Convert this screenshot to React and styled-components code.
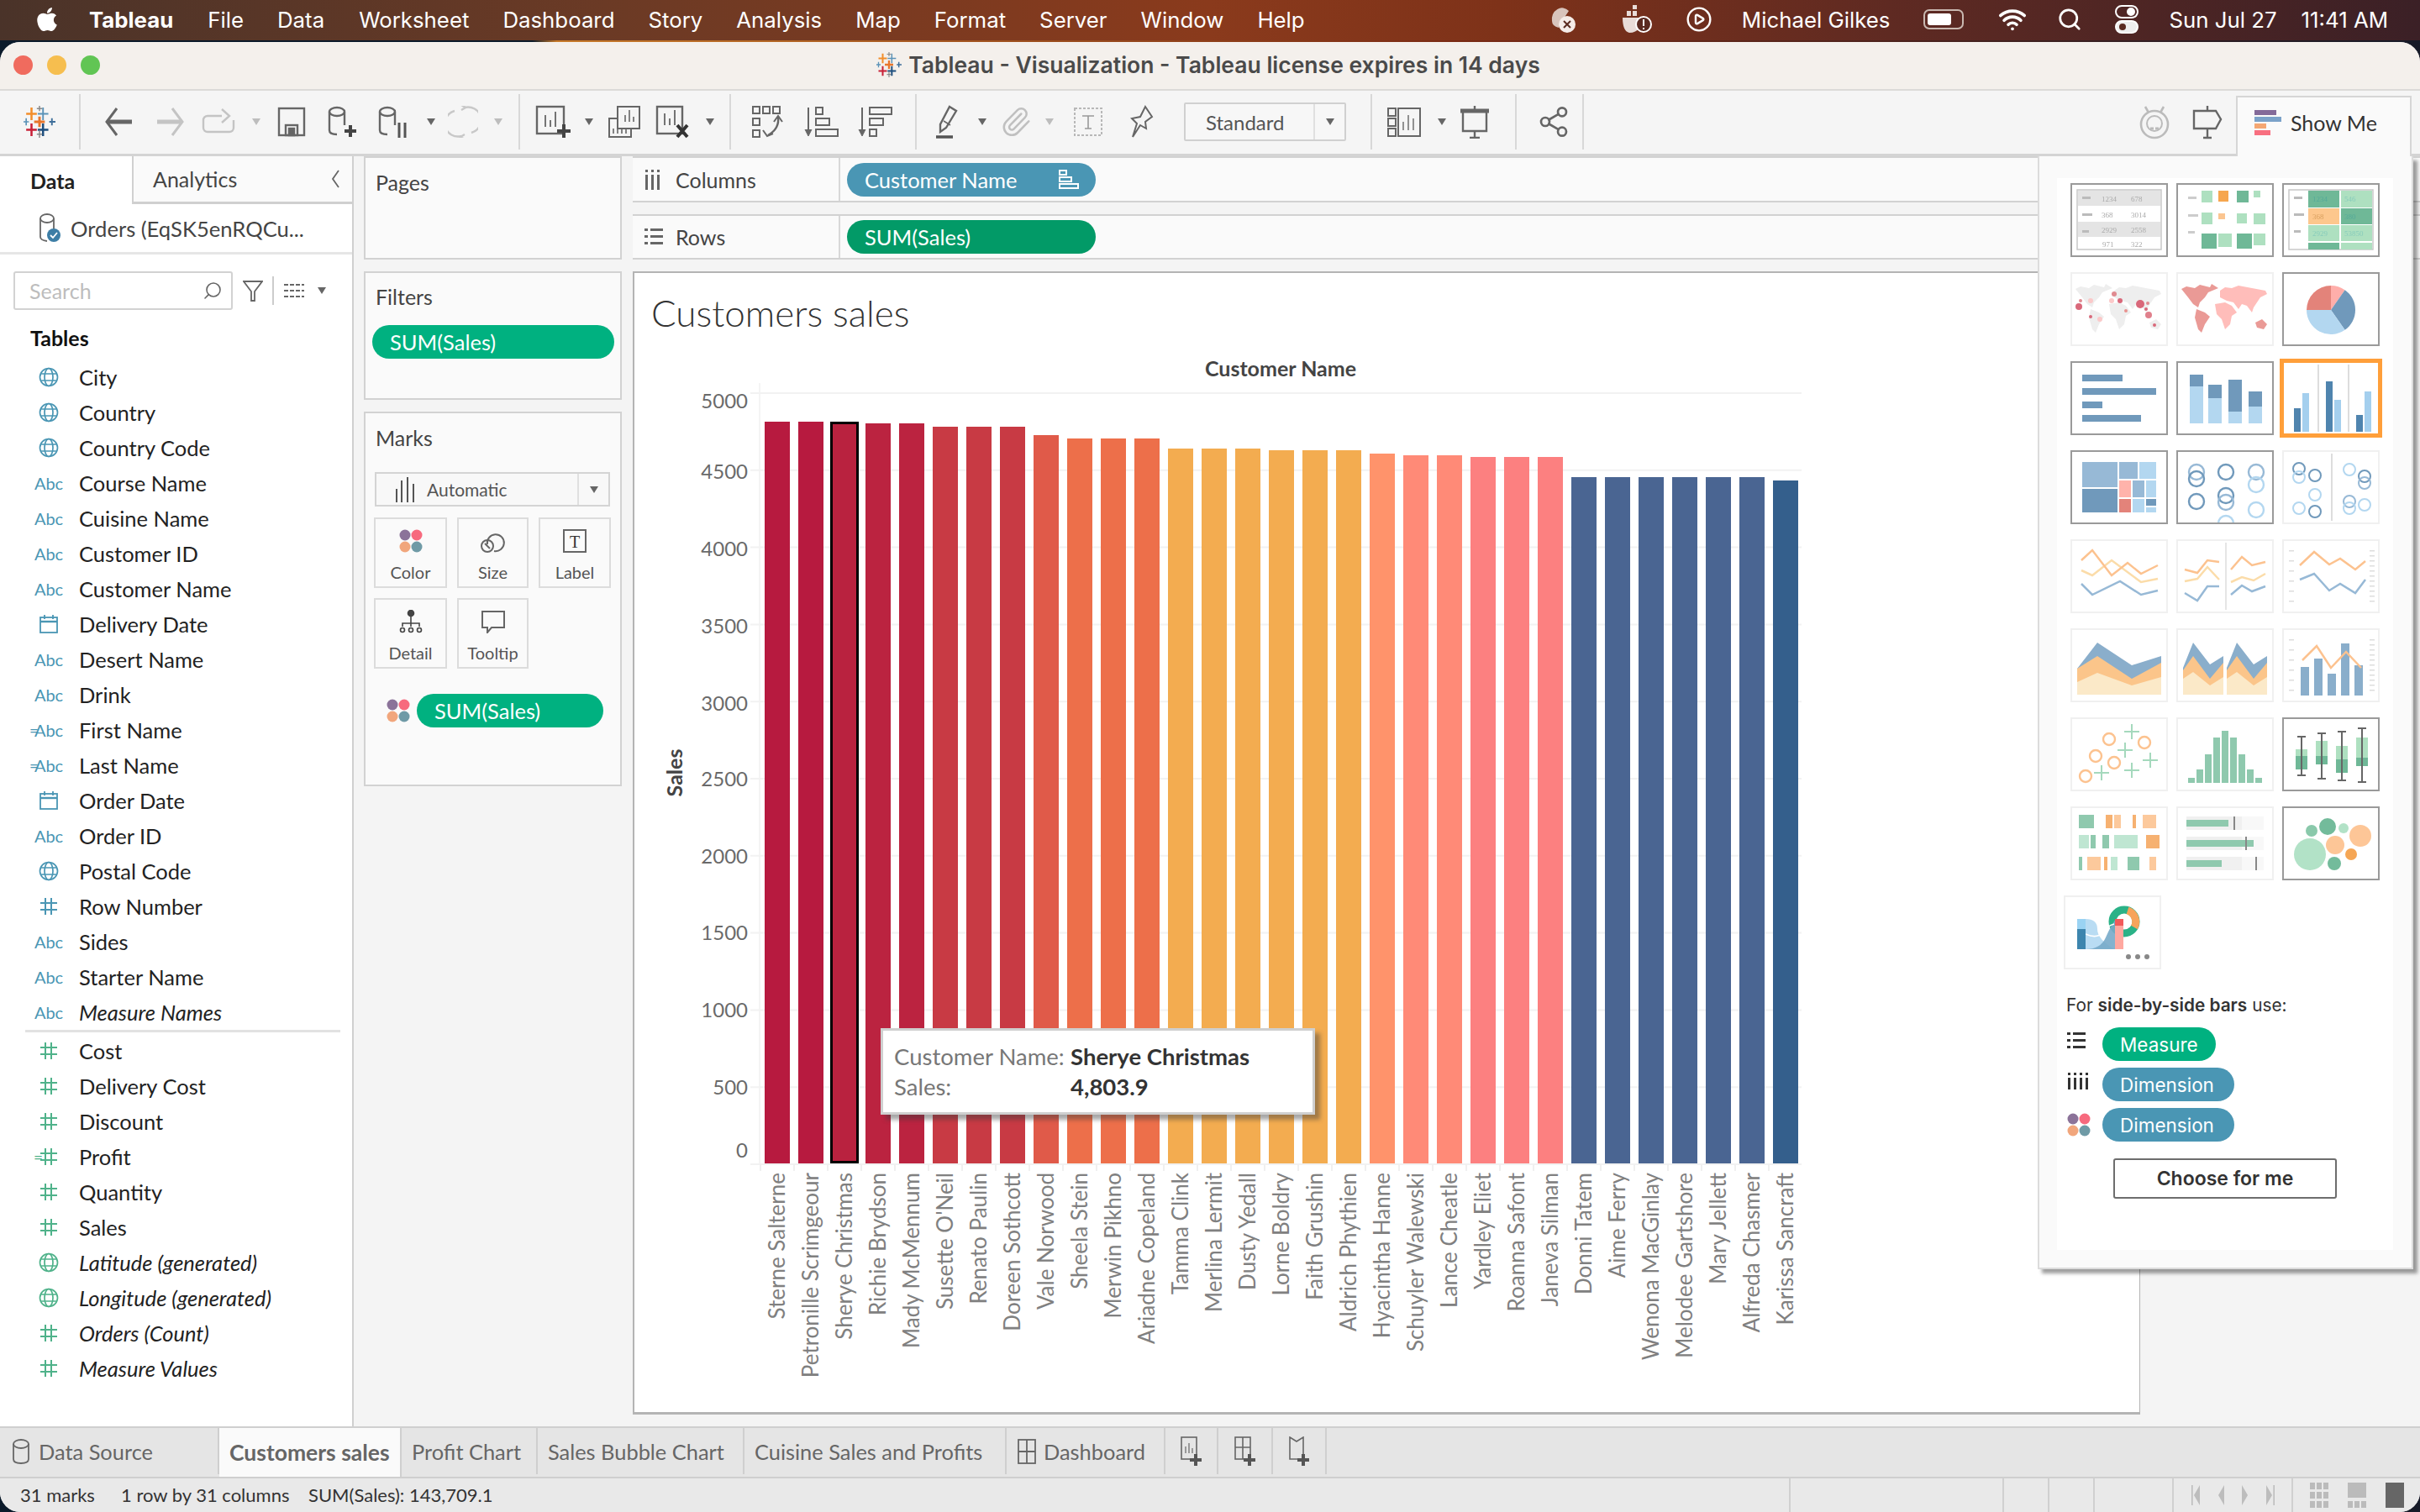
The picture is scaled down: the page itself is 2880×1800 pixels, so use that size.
import styled, { createGlobalStyle } from "styled-components";
import { FaApple } from "react-icons/fa";
import { CirclePlay, Paperclip, Search, Share2, Wifi } from "lucide-react";

const GREEN = "#00b180";
const GREEN_DARK = "#029a67";
const BLUE = "#4a96b4";
const FIELD_GREEN = "#4fb28a";

const GlobalStyle = createGlobalStyle`
  html, body { margin: 0; padding: 0; }
  body { font-family: "Lato", "Liberation Sans", sans-serif; background: #0a1626; }
  * { box-sizing: border-box; }
`;

const Desktop = styled.div`
  width: 2880px;
  height: 1800px;
  overflow: hidden;
  display: flex;
  flex-direction: column;
  background: linear-gradient(90deg, #0b1a2a 0%, #0b1a2a 22%, #c77a2a 23%, #7a2a14 60%, #161a28 100%);
`;

/* ---- menu bar ---- */
const MenuBar = styled.div`
  height: 48px;
  flex: none;
  display: flex;
  align-items: center;
  padding: 0 0 2px 40px;
  color: #fff;
  font-family: "Inter", "Liberation Sans", sans-serif;
  font-size: 25.8px;
  background: linear-gradient(90deg, #4a3329 0%, #6b3a25 25%, #8a3a1c 50%, #7e3219 62%, #5f2a22 78%, #3b2026 100%);
`;
const MenuItem = styled.span`
  margin-left: ${(p) => p.$gap}px;
  font-weight: ${(p) => (p.$bold ? 700 : 400)};
`;
const MenuRight = styled.div`
  margin-left: auto;
  display: flex;
  align-items: center;
  height: 100%;
`;
const MenuSlot = styled.div`
  width: ${(p) => p.$w}px;
  display: flex;
  justify-content: center;
  align-items: center;
`;
const BatteryShell = styled.div`
  width: 48px;
  height: 24px;
  margin-left: 16px;
  border: 2px solid #c8b8b0;
  border-radius: 7px;
  padding: 3px;
  &::before {
    content: "";
    display: block;
    width: 28px;
    height: 14px;
    background: #fff;
    border-radius: 3px;
  }
`;

/* ---- window chrome ---- */
const Window = styled.div`
  flex: 1;
  margin-top: 2px;
  min-height: 0;
  display: flex;
  flex-direction: column;
  border-radius: 24px;
  overflow: hidden;
  background: #f4f4f4;
`;
const TitleBar = styled.div`
  height: 58px;
  flex: none;
  display: flex;
  align-items: center;
  justify-content: center;
  position: relative;
  background: #f4f0ec;
  border-bottom: 2px solid #dcdad8;
  font-family: "Inter", "Liberation Sans", sans-serif;
  font-size: 26.5px;
  font-weight: 600;
  color: #4a4a4a;
  gap: 8px;
  padding: 0 4px 2px 0;
`;
const Traffic = styled.div`
  position: absolute;
  left: 16px;
  top: 16px;
  display: flex;
  gap: 17px;
`;
const Light = styled.span`
  width: 23px;
  height: 23px;
  border-radius: 50%;
  background: ${(p) => p.$c};
`;
const Toolbar = styled.div`
  height: 78px;
  flex: none;
  display: flex;
  align-items: stretch;
  position: relative;
  background: #f5f5f5;
  border-bottom: 3px solid #d4d4d4;
  padding-right: 10px;
`;
const ToolGroup = styled.div`
  display: flex;
  align-items: center;
  margin: 4px 0 5px;
  border-right: 2px solid #d8d8d8;
  width: ${(p) => p.$w}px;
  flex: none;
  &:last-of-type { border-right: 0; }
`;
const ToolSlot = styled.div`
  width: ${(p) => p.$w}px;
  flex: none;
  display: flex;
  justify-content: center;
  align-items: center;
`;
const Caret = styled.span`
  width: 0;
  height: 0;
  border-left: 5px solid transparent;
  border-right: 5px solid transparent;
  border-top: 8px solid ${(p) => (p.$light ? "#bdbdbd" : "#666")};
`;
const ViewSelect = styled.div`
  width: 193px;
  height: 46px;
  flex: none;
  margin-left: 25px;
  display: flex;
  align-items: center;
  border: 2px solid #d0d0d0;
  border-radius: 2px;
  background: #f7f7f7;
  font-size: 24px;
  color: #555;
  padding-left: 24px;
  > span { flex: 1; }
`;
const SelectArrow = styled.div`
  width: 37px;
  height: 100%;
  border-left: 2px solid #e0e0e0;
  display: flex;
  align-items: center;
  justify-content: center;
`;
const RightTools = styled.div`
  display: flex;
  align-items: center;
  position: absolute;
  left: 2532px;
  height: 75px;
`;
const ShowMeTab = styled.div`
  width: 209px;
  margin-left: auto;
  margin-top: 6px;
  margin-bottom: -3px;
  height: 72px;
  position: relative;
  z-index: 5;
  display: flex;
  align-items: center;
  gap: 11px;
  padding: 0 0 10px 20px;
  background: #fafafa;
  border: 2px solid #d6d6d6;
  border-bottom: 0;
  font-size: 25px;
  color: #333;
`;

/* ---- workspace ---- */
const Workspace = styled.div`
  flex: 1;
  min-height: 0;
  display: flex;
  position: relative;
  background: #f4f4f4;
`;
const DataPane = styled.aside`
  width: 421px;
  flex: none;
  background: #fff;
  border-right: 2px solid #d0d0d0;
  display: flex;
  flex-direction: column;
`;
const PaneTabs = styled.div`
  display: flex;
  height: 57px;
  flex: none;
`;
const PaneTab = styled.div`
  display: flex;
  align-items: center;
  font-size: 25px;
  color: ${(p) => (p.$active ? "#222" : "#444")};
  font-weight: ${(p) => (p.$active ? 700 : 400)};
  width: ${(p) => (p.$active ? "157px" : "auto")};
  flex: ${(p) => (p.$active ? "none" : "1")};
  padding-left: ${(p) => (p.$active ? "36px" : "23px")};
  background: ${(p) => (p.$active ? "#fff" : "#fafafa")};
  border-left: ${(p) => (p.$active ? "0" : "2px solid #d0d0d0")};
  border-bottom: ${(p) => (p.$active ? "0" : "3px solid #d0d0d0")};
  justify-content: ${(p) => (p.$active ? "flex-start" : "space-between")};
  padding-right: 14px;
`;
const SourceRow = styled.div`
  height: 60px;
  flex: none;
  display: flex;
  align-items: center;
  gap: 10px;
  padding-left: 44px;
  font-size: 25.6px;
  color: #444;
  border-bottom: 3px solid #e6e6e6;
`;
const SearchRow = styled.div`
  margin-top: 20px;
  height: 46px;
  flex: none;
  display: flex;
  align-items: center;
  padding-left: 16px;
`;
const SearchBox = styled.div`
  width: 261px;
  height: 100%;
  display: flex;
  align-items: center;
  justify-content: space-between;
  border: 2px solid #d2d2d2;
  border-radius: 3px;
  padding: 0 10px 0 17px;
  font-size: 25px;
  color: #bdbdbd;
  svg { transform: scaleX(-1); }
`;
const SearchTools = styled.div`
  display: flex;
  align-items: center;
  margin-left: 12px;
  gap: 10px;
`;
const TablesTitle = styled.div`
  height: 40px;
  margin-top: 13px;
  flex: none;
  display: flex;
  align-items: center;
  padding-left: 36px;
  font-size: 25px;
  font-weight: 700;
  color: #111;
`;
const FieldList = styled.div`
  margin-top: 6px;
  display: flex;
  flex-direction: column;
`;
const FieldRow = styled.div`
  height: 42px;
  flex: none;
  display: flex;
  align-items: center;
  padding-left: 30px;
  font-size: 25.5px;
  color: #222;
  font-style: ${(p) => (p.$italic ? "italic" : "normal")};
`;
const FieldIconSlot = styled.div`
  width: 56px;
  height: 100%;
  margin-right: 8px;
  flex: none;
  position: relative;
  display: flex;
  align-items: center;
  justify-content: center;
  font-style: normal;
`;
const AbcMark = styled.span`
  font-size: 20px;
  color: ${BLUE};
`;
const CalcMark = styled.span`
  position: absolute;
  left: ${(p) => p.$left}px;
  font-size: 19px;
  color: ${(p) => p.$c};
`;
const Divider = styled.div`
  height: 3px;
  flex: none;
  margin: 0 14px 1px 30px;
  background: #e2e2e2;
`;

/* ---- pages / filters / marks ---- */
const CardsColumn = styled.div`
  width: 307px;
  flex: none;
  margin: 0 13px 0 12px;
  display: flex;
  flex-direction: column;
  gap: 14px;
`;
const Card = styled.section`
  height: ${(p) => p.$h}px;
  flex: none;
  background: #fafafa;
  border: 2px solid #d2d2d2;
  padding: ${(p) => p.$pt}px 12px 0 8px;
`;
const CardTitle = styled.div`
  font-size: 25px;
  line-height: 30px;
  color: #444;
  padding-left: 4px;
`;
const Pill = styled.div`
  display: flex;
  align-items: center;
  justify-content: space-between;
  height: 40px;
  flex: none;
  width: ${(p) => p.$w}px;
  border-radius: 20px;
  background: ${(p) => p.$c};
  color: #fff;
  font-size: 25.5px;
  padding: 0 20px 0 21px;
`;
const FilterPill = styled(Pill)`
  margin-top: 19px;
`;
const MarkSelect = styled.div`
  margin-top: 26px;
  margin-left: 3px;
  width: 280px;
  height: 41px;
  border: 2px solid #d4d4d4;
  display: flex;
  align-items: center;
  font-size: 21px;
  color: #555;
  padding-left: 23px;
  gap: 15px;
  background: #f8f8f8;
  > span { flex: 1; }
`;
const MarkGrid = styled.div`
  margin: 13px 0 0 2px;
  display: grid;
  grid-template-columns: 87px 85px 86px;
  grid-auto-rows: 84px;
  gap: 12px;
  width: 280px;
`;
const MarkButton = styled.div`
  border: 2px solid #dcdcdc;
  background: #fafafa;
  display: flex;
  flex-direction: column;
  align-items: center;
  justify-content: flex-start;
  padding-top: 12px;
  font-size: 20px;
  color: #555;
  gap: 11px;
  svg { flex: none; }
`;
const MarkField = styled.div`
  margin: 30px 0 0 17px;
  display: flex;
  align-items: center;
  gap: 8px;
`;

/* ---- shelves and view ---- */
const SheetColumn = styled.div`
  flex: 1;
  min-width: 0;
  display: flex;
  flex-direction: column;
`;
const Shelf = styled.div`
  height: ${(p) => p.$h}px;
  flex: none;
  display: flex;
  align-items: center;
  background: #fafafa;
  border-top: 2px solid #d2d2d2;
  border-bottom: 2px solid #d2d2d2;
  margin-bottom: 14px;
`;
const ShelfLabel = styled.div`
  width: 247px;
  height: 100%;
  flex: none;
  display: flex;
  align-items: center;
  gap: 15px;
  padding-left: 14px;
  font-size: 25px;
  color: #444;
  border-right: 2px solid #d8d8d8;
  margin-right: 8px;
`;
const View = styled.div`
  width: 1794px;
  height: 1361px;
  flex: none;
  position: relative;
  background: #fff;
  border: 2px solid #b4b4b4;
  border-bottom-width: 3px;
  border-right-width: 1px;
`;
const ViewTitle = styled.h2`
  margin: 0;
  height: 95px;
  padding: 22px 0 0 20px;
  font-size: 44px;
  line-height: 50px;
  font-weight: 300;
  color: #333;
`;
const ChartSvg = styled.svg`
  display: block;
  text {
    font-family: "Lato", "Liberation Sans", sans-serif;
  }
`;
const Tooltip = styled.div`
  position: absolute;
  left: 293px;
  top: 899px;
  width: 517px;
  height: 103px;
  background: #fff;
  border: 3px solid #cfcfcf;
  box-shadow: 6px 6px 5px rgba(60, 60, 60, 0.45);
  display: grid;
  grid-template-columns: 210px 1fr;
  grid-auto-rows: 36px;
  padding: 12px 0 0 13px;
  font-size: 27.5px;
  align-items: center;
  color: #777;
  b {
    font-weight: 700;
    color: #333;
  }
`;

/* ---- show me ---- */
const ShowMePanel = styled.div`
  position: absolute;
  z-index: 4;
  left: 2425px;
  top: 0;
  width: 447px;
  height: 1325px;
  background: #fafafa;
  border: 2px solid #dcdcdc;
  border-top: 0;
  padding: 26px 0 0 21px;
  box-shadow: 5px 5px 4px rgba(0, 0, 0, 0.38);
`;
const ShowMeInner = styled.div`
  width: 400px;
  height: 1276px;
  background: #fff;
  padding: 6px 0 0 16px;
  font-family: "Inter", "Liberation Sans", sans-serif;
`;
const ThumbGrid = styled.div`
  display: grid;
  grid-template-columns: repeat(3, 116px);
  grid-auto-rows: 88px;
  column-gap: 10px;
  row-gap: 18px;
`;
const Thumb = styled.div`
  position: relative;
  border: 2px solid ${(p) => (p.$sel ? "#ff9f3a" : p.$on ? "#9a9a9a" : "#f0f0f0")};
  box-shadow: ${(p) => (p.$sel ? "0 0 0 3px #ff9f3a" : "none")};
  background: #fff;
  margin-left: ${(p) => (p.$shift ? "-8px" : "0")};
  margin-right: ${(p) => (p.$shift ? "8px" : "0")};
  overflow: hidden;
  svg {
    position: absolute;
    left: -2px;
    top: -2px;
    filter: blur(0.45px);
  }
`;
const Hint = styled.div`
  margin: 30px 0 0 -5px;
  font-size: 20.8px;
  line-height: 26px;
  color: #333;
  b { font-weight: 600; }
`;
const NeedList = styled.div`
  margin: 13px 0 0 -4px;
  display: flex;
  flex-direction: column;
  gap: 8px;
`;
const NeedRow = styled.div`
  display: flex;
  align-items: center;
  gap: 14px;
  svg { flex: none; }
`;
const NeedIcon = styled.div`
  width: 28px;
  display: flex;
  align-self: ${(p) => (p.$top ? "flex-start" : "center")};
  padding-top: ${(p) => (p.$top ? "6px" : "0")};
`;
const NeedPill = styled(Pill)`
  width: ${(p) => p.$w}px;
  font-size: 22.5px;
  padding: 0 0 0 21px;
`;
const ChooseButton = styled.button`
  display: block;
  margin: 20px 0 0 51px;
  width: 266px;
  height: 48px;
  background: #fff;
  border: 2px solid #6d6d6d;
  border-radius: 3px;
  font-family: inherit;
  font-size: 23px;
  font-weight: 600;
  color: #333;
`;

/* ---- tabs and status ---- */
const SheetTabs = styled.div`
  height: 60px;
  flex: none;
  display: flex;
  background: #e5e5e5;
  border-top: 2px solid #cfcfcf;
`;
const SheetTab = styled.div`
  width: ${(p) => p.$w}px;
  flex: none;
  display: flex;
  align-items: center;
  justify-content: ${(p) => (p.$center ? "center" : "flex-start")};
  gap: 8px;
  padding-left: ${(p) => (p.$center ? 0 : p.$pl ?? 12)}px;
  font-size: ${(p) => (p.$active ? 26.5 : 25.4)}px;
  color: #666;
  font-weight: ${(p) => (p.$active ? 700 : 400)};
  background: ${(p) => (p.$active ? "#fafafa" : "transparent")};
  border-right: 2px solid #cfcfcf;
  margin-bottom: ${(p) => (p.$active ? "0" : "3px")};
  white-space: nowrap;
`;
const StatusBar = styled.div`
  height: 42px;
  flex: none;
  display: flex;
  align-items: stretch;
  background: #e9e9e9;
  border-top: 2px solid #cfcfcf;
  font-size: 22px;
  color: #333;
`;
const StatusText = styled.div`
  display: flex;
  align-items: center;
  white-space: nowrap;
  margin-left: ${(p) => p.$ml}px;
  width: ${(p) => p.$w}px;
  flex: none;
  padding-bottom: 2px;
`;
const StatusCell = styled.div`
  width: ${(p) => p.$w}px;
  flex: none;
  display: flex;
  align-items: center;
  justify-content: space-around;
  border-left: 2px solid #d0d0d0;
  padding: 0 ${(p) => p.$px ?? 0}px;
`;

/* ---- small svg helpers ---- */
const Svg = ({ w = 40, h = 40, vb, children, stroke = "#666", sw = 2.4 }) => (
  <svg
    width={w}
    height={h}
    viewBox={vb || `0 0 ${w} ${h}`}
    fill="none"
    stroke={stroke}
    strokeWidth={sw}
    strokeLinecap="butt"
  >
    {children}
  </svg>
);

const TableauLogo = ({ size = 38 }) => (
  <svg width={size} height={size} viewBox="0 0 36 36" fill="none" strokeWidth="2.4">
    <path d="M9 2v14M3 9h12" stroke="#f28e2b" />
    <path d="M22 2v14M16 9h12" stroke="#5b93b8" strokeWidth="1.8" />
    <path d="M18 12v12M12 18h12" stroke="#e8762c" strokeWidth="2.8" />
    <path d="M3 14v8M0 18h6" stroke="#5b93b8" strokeWidth="1.6" />
    <path d="M32 14v8M29 18h7" stroke="#3f6f9b" strokeWidth="1.8" />
    <path d="M9 20v14M3 27h12" stroke="#c72037" />
    <path d="M22 20v14M16 27h12" stroke="#1f4f7f" />
    <path d="M18 28v8M15 32h6" stroke="#888" strokeWidth="1.4" />
    <path d="M18 0v6M15 3h6" stroke="#888" strokeWidth="1.4" />
  </svg>
);

const BackIcon = ({ c = "#666", flip }) => (
  <Svg stroke={c} sw={4} w={38} h={36}>
    <g transform={flip ? "translate(38 0) scale(-1 1)" : undefined}>
      <path d="M18 2 L6 18 L18 34" strokeWidth="3" />
      <path d="M6 18 H36" strokeWidth="5" />
    </g>
  </Svg>
);
const RedoIcon = () => (
  <Svg stroke="#c4c4c4" w={42} h={34}>
    <path d="M24 10H7a5 5 0 0 0-5 5v9a5 5 0 0 0 5 5h26a5 5 0 0 0 5-5v-9" />
    <path d="M24 2l9 8-9 8" />
  </Svg>
);
const SaveIcon = () => (
  <Svg w={34} h={36}>
    <rect x="2" y="2" width="30" height="32" />
    <rect x="10" y="22" width="14" height="12" />
    <rect x="14" y="26" width="6" height="8" fill="#666" />
  </Svg>
);
const CylinderIcon = ({ children, c = "#666" }) => (
  <Svg w={42} h={38} stroke={c}>
    <ellipse cx="12" cy="7" rx="9" ry="5" />
    <path d="M3 7v22q0 5 9 5M21 7v16" />
    {children}
  </Svg>
);
const PlusMark = ({ x, y, s = 7, c = "#444" }) => (
  <path d={`M${x} ${y - s}v${s * 2}M${x - s} ${y}h${s * 2}`} stroke={c} strokeWidth="4" />
);
const SheetBars = () => <path d="M11 12v14M17 18v8M23 8v18" strokeWidth="1.8" />;
const NewSheetIcon = () => (
  <Svg w={44} h={40}>
    <rect x="2" y="2" width="32" height="32" />
    <g transform="translate(1 0)"><SheetBars /></g>
    <PlusMark x={34} y={31} s={8} />
  </Svg>
);
const DupSheetIcon = () => (
  <Svg w={44} h={40} sw={2}>
    <rect x="12" y="2" width="26" height="26" fill="#f5f5f5" />
    <path d="M21 20v-8M26 20v-14M31 20v-6" strokeWidth="1.6" />
    <path d="M12 16H2v22h26v-10" />
    <path d="M7 28v6M12 28v6M17 28v6M22 28v6" strokeWidth="1.6" />
  </Svg>
);
const ClearSheetIcon = () => (
  <Svg w={44} h={40}>
    <rect x="2" y="2" width="30" height="32" />
    <g transform="translate(0 -2)"><SheetBars /></g>
    <path d="M26 24l12 14M38 24L26 38" stroke="#333" strokeWidth="4" />
  </Svg>
);
const SwapIcon = () => (
  <Svg w={42} h={40} sw={2}>
    <rect x="2" y="2" width="8" height="8" />
    <rect x="14" y="2" width="8" height="8" />
    <rect x="26" y="2" width="8" height="8" />
    <rect x="2" y="16" width="8" height="8" />
    <rect x="2" y="30" width="8" height="8" />
    <path d="M32 14q2 14-12 22" strokeWidth="2.4" />
    <path d="M27 20l5-7 5 7M14 30l5 7 7-3" strokeWidth="2" />
  </Svg>
);
const SortIcon = ({ desc, c = "#666" }) => (
  <g stroke={c}>
    <path d="M5 2v32" strokeWidth="2" />
    <path d="M1 28l4 8 4-8" fill={c} strokeWidth="1" />
    <rect x="14" y="2" width={desc ? 26 : 8} height="8" strokeWidth="2" />
    <rect x="14" y="15" width={16} height="8" strokeWidth="2" />
    <rect x="14" y="28" width={desc ? 8 : 26} height="8" strokeWidth="2" />
  </g>
);
const HighlightIcon = () => (
  <Svg w={30} h={40}>
    <path d="M18 2l8 5-12 20-7 5 0-9z" />
    <path d="M11 19l8 5" strokeWidth="1.5" />
    <path d="M2 38h20" strokeWidth="3.4" stroke="#555" />
  </Svg>
);
const LabelDashIcon = () => (
  <Svg w={36} h={36} stroke="#b8b8b8" sw={2}>
    <rect x="2" y="2" width="32" height="32" strokeDasharray="3 2" />
    <path d="M11 11h14M18 11v15M14 26h8" stroke="#999" strokeWidth="1.6" />
  </Svg>
);
const PinIcon = () => (
  <Svg w={28} h={40} sw={2}>
    <path d="M18 2l8 12-8 6 1 8-7-4-9 14 5-16-6-6 10-2z" />
  </Svg>
);
const ShowCardsIcon = () => (
  <Svg w={46} h={36} sw={2}>
    <rect x="2" y="2" width="9" height="9" />
    <rect x="2" y="14" width="9" height="9" />
    <rect x="2" y="26" width="9" height="9" />
    <rect x="14" y="2" width="26" height="33" />
    <path d="M20 28v-10M26 28v-18M32 28v-14" strokeWidth="1.4" />
  </Svg>
);
const PresentationIcon = () => (
  <Svg w={36} h={40}>
    <path d="M1 7h34" strokeWidth="5" />
    <path d="M4 7v24h28V7" />
    <path d="M18 1v4M18 31v8M12 39h12" />
  </Svg>
);
const BotIcon = () => (
  <Svg w={40} h={42} stroke="#bbb" sw={2.6}>
    <circle cx="20" cy="23" r="16" />
    <path d="M9 2l4 7M31 2l-4 7" />
    <circle cx="20" cy="22" r="9" strokeWidth="2" />
    <path d="M15 28h4M21 28h4" strokeWidth="3" />
  </Svg>
);
const SignpostIcon = () => (
  <Svg w={36} h={40}>
    <path d="M2 6h26l6 10-6 11H2zM18 0v6M18 27v11M13 38h10" />
  </Svg>
);
const ShowMeIcon = () => (
  <svg width="32" height="30" viewBox="0 0 32 30">
    <rect x="0" y="0" width="26" height="6" fill="#846a99" />
    <rect x="0" y="8" width="32" height="6" fill="#7ba2c9" />
    <rect x="0" y="16" width="14" height="6" fill="#f4a773" />
    <rect x="0" y="24" width="19" height="6" fill="#f86f80" />
  </svg>
);
const MarkTypeIcon = () => (
  <svg width="22" height="30" viewBox="0 0 22 30" fill="#555">
    <rect x="0" y="14" width="2" height="16" />
    <rect x="6" y="4" width="2" height="26" />
    <rect x="13" y="0" width="2" height="30" />
    <rect x="20" y="8" width="2" height="22" />
  </svg>
);

const PaletteDots = ({ size = 28 }) => (
  <svg width={size} height={size} viewBox="0 0 28 28">
    <circle cx="7" cy="7" r="6.5" fill="#8b7399" />
    <circle cx="21" cy="7" r="6.5" fill="#f76a7e" />
    <circle cx="7" cy="21" r="6.5" fill="#f1a67c" />
    <circle cx="21" cy="21" r="6.5" fill="#6f9aa6" />
  </svg>
);
const DimMiniIcon = ({ c = "#fff" }) => (
  <svg width="24" height="24" viewBox="0 0 24 24" fill="none" stroke={c} strokeWidth="2">
    <rect x="1" y="1" width="8" height="5" />
    <rect x="1" y="9" width="14" height="5" />
    <rect x="1" y="17" width="22" height="5" />
  </svg>
);
const ColumnsIcon = ({ c = "#666", n = 3, h = 24 }) => (
  <svg width={n * 7 + 1} height={h} viewBox={`0 0 ${n * 7 + 1} ${h}`} fill={c}>
    {Array.from({ length: n }, (_, i) => (
      <g key={i}>
        <rect x={i * 7 + 1} y="0" width="3" height="3" />
        <rect x={i * 7 + 1} y="6" width="3" height={h - 6} />
      </g>
    ))}
  </svg>
);
const RowsIcon = ({ c = "#666" }) => (
  <svg width="22" height="20" viewBox="0 0 22 20" fill={c}>
    {[0, 8, 16].map((y) => (
      <g key={y}>
        <rect x="0" y={y} width="4" height="3" />
        <rect x="7" y={y} width="15" height="3" />
      </g>
    ))}
  </svg>
);

const GlobeIcon = ({ c }) => (
  <Svg w={24} h={24} stroke={c} sw={1.7}>
    <circle cx="12" cy="12" r="10.5" />
    <ellipse cx="12" cy="12" rx="5" ry="10.5" />
    <path d="M2 8h20M2 16h20" />
  </Svg>
);
const HashIcon = ({ c }) => (
  <Svg w={22} h={22} stroke={c} sw={2}>
    <path d="M7 1v20M14 1v20M1 7h20M1 15h20" />
  </Svg>
);
const CalendarIcon = ({ c }) => (
  <Svg w={24} h={24} stroke={c} sw={1.8}>
    <rect x="2" y="4" width="20" height="18" />
    <path d="M2 9h20" strokeWidth="2.4" />
    <path d="M7 1v5M17 1v5" />
  </Svg>
);

const FieldIcon = ({ type, c }) => {
  if (type === "abc") return <AbcMark>Abc</AbcMark>;
  if (type === "calcAbc")
    return (
      <>
        <CalcMark $left={5} $c={BLUE}>=</CalcMark>
        <AbcMark>Abc</AbcMark>
      </>
    );
  if (type === "globe") return <GlobeIcon c={c} />;
  if (type === "date") return <CalendarIcon c={c} />;
  if (type === "calcNum")
    return (
      <>
        <CalcMark $left={10} $c={c}>=</CalcMark>
        <HashIcon c={c} />
      </>
    );
  return <HashIcon c={c} />;
};

const DIMS = [
  ["City", "globe"],
  ["Country", "globe"],
  ["Country Code", "globe"],
  ["Course Name", "abc"],
  ["Cuisine Name", "abc"],
  ["Customer ID", "abc"],
  ["Customer Name", "abc"],
  ["Delivery Date", "date"],
  ["Desert Name", "abc"],
  ["Drink", "abc"],
  ["First Name", "calcAbc"],
  ["Last Name", "calcAbc"],
  ["Order Date", "date"],
  ["Order ID", "abc"],
  ["Postal Code", "globe"],
  ["Row Number", "num"],
  ["Sides", "abc"],
  ["Starter Name", "abc"],
  ["Measure Names", "abc", true],
];
const MEASURES = [
  ["Cost", "num"],
  ["Delivery Cost", "num"],
  ["Discount", "num"],
  ["Profit", "calcNum"],
  ["Quantity", "num"],
  ["Sales", "num"],
  ["Latitude (generated)", "globe", true],
  ["Longitude (generated)", "globe", true],
  ["Orders (Count)", "num", true],
  ["Measure Values", "num", true],
];

const RED = "#b71a3f";
const ORANGE = "#ed6f4a";
const AMBER = "#f3ac50";
const NAVY = "#4a6592";
const BARS = [
  ["Sterne Salterne", 502, RED],
  ["Petronille Scrimgeour", 502, RED],
  ["Sherye Christmas", 502, "#b9223f"],
  ["Richie Brydson", 504, "#bb2340"],
  ["Mady McMennum", 504, "#bb2340"],
  ["Susette O'Neil", 508, "#c83a44"],
  ["Renato Paulin", 508, "#c83a44"],
  ["Doreen Sothcott", 508, "#c83a44"],
  ["Vale Norwood", 518, "#e05a49"],
  ["Sheela Stein", 522, ORANGE],
  ["Merwin Pikhno", 522, ORANGE],
  ["Ariadne Copeland", 522, ORANGE],
  ["Tamma Clink", 534, AMBER],
  ["Merlina Lermit", 534, AMBER],
  ["Dusty Yedall", 534, AMBER],
  ["Lorne Boldry", 536, AMBER],
  ["Faith Grushin", 536, AMBER],
  ["Aldrich Phythien", 536, AMBER],
  ["Hyacintha Hanne", 540, "#ff936b"],
  ["Schuyler Walewski", 542, "#ff8a77"],
  ["Lance Cheatle", 542, "#ff8a77"],
  ["Yardley Eliet", 544, "#fc8080"],
  ["Roanna Safont", 544, "#fc8080"],
  ["Janeva Silman", 544, "#fc8080"],
  ["Donni Tatem", 568, NAVY],
  ["Aime Ferry", 568, NAVY],
  ["Wenona MacGinlay", 568, NAVY],
  ["Melodee Gartshore", 568, NAVY],
  ["Mary Jellett", 568, NAVY],
  ["Alfreda Chasmer", 568, NAVY],
  ["Karissa Sancraft", 572, "#345f8c"],
];
const TICKS = [
  [5000, 476],
  [4500, 560],
  [4000, 652],
  [3500, 744],
  [3000, 836],
  [2500, 926],
  [2000, 1018],
  [1500, 1109],
  [1000, 1201],
  [500, 1293],
  [0, 1368],
];

const Chart = () => (
  <ChartSvg width="1791" height="1261" viewBox="755 420 1791 1261">
    <path d="M904 456V1386" stroke="#f4f4f4" strokeWidth="2" />
    {Array.from({ length: 11 }, (_, i) => (
      <path key={i} d={`M893 ${468 + i * 91.8}H2144`} stroke="#f2f2f2" strokeWidth="2" />
    ))}
    {BARS.map(([name], i) => (
      <path key={name} d={`M${905 + i * 40} 1386v8`} stroke="#f0f0f0" strokeWidth="2" />
    ))}
    {BARS.map(([name, top, color], i) => (
      <rect key={name} x={910 + i * 40} y={top} width="30" height={1385 - top} fill={color} />
    ))}
    <rect x="989.5" y="503.5" width="31" height="880" fill="none" stroke="#000" strokeWidth="3" />
    {TICKS.map(([v, y]) => (
      <text key={v} x="890" y={y + 10} textAnchor="end" fontSize="24" fill="#6a6a6a">
        {v}
      </text>
    ))}
    {BARS.map(([name], i) => (
      <text
        key={name}
        transform={`translate(${934 + i * 40} 1396) rotate(-90)`}
        textAnchor="end"
        fontSize="26"
        fill="#808080"
      >
        {name}
      </text>
    ))}
    <text x="1524" y="448" textAnchor="middle" fontSize="25" fontWeight="700" fill="#444">
      Customer Name
    </text>
    <text
      transform="translate(812 920) rotate(-90)"
      textAnchor="middle"
      fontSize="25"
      fontWeight="700"
      fill="#444"
    >
      Sales
    </text>
  </ChartSvg>
);

/* ---- show me thumbnails, drawn in a 116x88 box ---- */
const Box = ({ r, f }) => <rect x={r[0]} y={r[1]} width={r[2] - r[0]} height={r[3] - r[1]} fill={f} />;
const Line = ({ pts, c, w = 2.5 }) => (
  <polyline points={pts.map((p) => p.join(",")).join(" ")} fill="none" stroke={c} strokeWidth={w} />
);
const Area = ({ pts, c }) => (
  <polygon
    points={`${pts.map((p) => p.join(",")).join(" ")} ${pts[pts.length - 1][0]},79 ${pts[0][0]},79`}
    fill={c}
  />
);
const polar = (cx, cy, r, deg) => {
  const a = ((deg - 90) * Math.PI) / 180;
  return `${(cx + r * Math.cos(a)).toFixed(1)} ${(cy + r * Math.sin(a)).toFixed(1)}`;
};
const Slice = ({ from, to, f }) => (
  <path
    d={`M58 45L${polar(58, 45, 29, from)}A29 29 0 ${to - from > 180 ? 1 : 0} 1 ${polar(58, 45, 29, to)}Z`}
    fill={f}
  />
);
const ThumbSvg = ({ children }) => (
  <svg width="116" height="88" viewBox="0 0 116 88">
    {children}
  </svg>
);
const TX = ({ x, y, children, f = "#aaa" }) => (
  <text x={x} y={y} fontSize="9" fontFamily="Liberation Serif, serif" fill={f}>
    {children}
  </text>
);

const LIGHT_G = "#aee0c0";
const DARK_G = "#6fb897";
const BLUE_D = "#7099bb";
const BLUE_M = "#97b9d6";
const BLUE_L = "#b3d7f0";
const OR_L = "#fcc28f";

const World = ({ land, west }) => (
  <>
    <path d="M6 20L12 17L22 19L28 15L40 18L42 14L50 19L38 24L34 30L28 36L26 42L20 38L14 30Z" fill={west} />
    <path d="M24 44L34 48L40 53L34 62L30 72L26 68L22 54Z" fill={west} />
    <path d="M52 22L58 18L66 19L74 16L90 19L106 22L108 26L100 30L96 36L92 42L90 48L84 40L78 38L74 44L68 36L60 34L52 30Z" fill={land} />
    <path d="M46 38L58 36L66 40L72 48L66 52L64 62L58 68L54 56L48 50Z" fill={land} />
    <path d="M94 60L102 56L108 62L104 68L96 66Z" fill={west} />
  </>
);

const THUMBS = [
  {
    on: true,
    draw: (
      <>
        <rect x="8" y="8" width="100" height="71" fill="#fff" stroke="#c8c8c8" strokeWidth="1.5" />
        <Box r={[9, 9, 107, 27]} f="#e4e4e4" />
        <Box r={[9, 46, 107, 64]} f="#e4e4e4" />
        <Box r={[14, 16, 24, 19]} f="#bbb" />
        <Box r={[14, 36, 26, 39]} f="#bbb" />
        <Box r={[14, 56, 22, 59]} f="#bbb" />
        <TX x="37" y="22">1234</TX><TX x="72" y="22">678</TX>
        <TX x="37" y="41">368</TX><TX x="72" y="41">3014</TX>
        <TX x="37" y="59">2929</TX><TX x="72" y="59">2558</TX>
        <TX x="38" y="76">971</TX><TX x="72" y="76">322</TX>
      </>
    ),
  },
  {
    on: true,
    draw: (
      <>
        <Box r={[14, 16, 24, 19]} f="#ccc" />
        <Box r={[14, 37, 26, 40]} f="#ccc" />
        <Box r={[14, 57, 22, 60]} f="#ccc" />
        <Box r={[30, 9, 43, 23]} f={LIGHT_G} />
        <Box r={[50, 9, 62, 22]} f="#f6a64e" />
        <Box r={[72, 9, 86, 23]} f={DARK_G} />
        <Box r={[92, 9, 100, 17]} f={LIGHT_G} />
        <Box r={[30, 35, 43, 49]} f={LIGHT_G} />
        <Box r={[50, 36, 58, 43]} f="#fbc590" />
        <Box r={[72, 36, 84, 48]} f={LIGHT_G} />
        <Box r={[92, 36, 106, 49]} f={LIGHT_G} />
        <Box r={[30, 60, 48, 78]} f={DARK_G} />
        <Box r={[50, 60, 66, 76]} f={LIGHT_G} />
        <Box r={[72, 60, 90, 78]} f={DARK_G} />
        <Box r={[92, 60, 106, 74]} f={LIGHT_G} />
      </>
    ),
  },
  {
    on: true,
    draw: (
      <>
        <rect x="8" y="8" width="100" height="71" fill="#fff" stroke="#c8c8c8" strokeWidth="1.5" />
        <Box r={[14, 16, 24, 19]} f="#bbb" />
        <Box r={[14, 36, 26, 39]} f="#bbb" />
        <Box r={[14, 56, 22, 59]} f="#bbb" />
        <Box r={[31, 9, 68, 29]} f={DARK_G} />
        <Box r={[70, 9, 107, 29]} f={LIGHT_G} />
        <Box r={[31, 30, 68, 49]} f="#fdc78d" />
        <Box r={[70, 30, 107, 49]} f={DARK_G} />
        <Box r={[31, 50, 68, 69]} f={LIGHT_G} />
        <Box r={[70, 50, 107, 69]} f={LIGHT_G} />
        <Box r={[31, 71, 68, 79]} f={DARK_G} />
        <Box r={[70, 71, 107, 79]} f={LIGHT_G} />
        <TX x="36" y="22" f="#5a9">1234</TX><TX x="74" y="22" f="#8cb">546</TX>
        <TX x="36" y="43" f="#d9a060">368</TX><TX x="74" y="43" f="#5a9">380</TX>
        <TX x="36" y="63" f="#8cb">2929</TX><TX x="74" y="63" f="#8cb">53850</TX>
      </>
    ),
  },
  {
    draw: (
      <>
        <World land="#eeeeee" west="#eeeeee" />
        {[
          [10, 41, 4, "#d9687a"],
          [12, 34, 2, "#e08a90"],
          [24, 34, 3, "#fbc9c9"],
          [24, 53, 2, "#d9687a"],
          [35, 56, 3, "#fbc9c9"],
          [52, 26, 3, "#e08a90"],
          [49, 34, 3, "#fbc9c9"],
          [59, 34, 3, "#d9687a"],
          [66, 46, 2, "#e8928f"],
          [83, 38, 5, "#d9687a"],
          [92, 37, 2, "#e08a90"],
          [90, 44, 2, "#d9687a"],
          [93, 51, 4, "#e0808c"],
          [100, 63, 2, "#d9687a"],
        ].map(([x, y, r, f]) => (
          <circle key={`${x}-${y}`} cx={x} cy={y} r={r} fill={f} />
        ))}
      </>
    ),
  },
  { draw: <World land="#ffbdba" west="#ea9a96" /> },
  {
    on: true,
    draw: (
      <>
        <Slice from={270} to={360} f="#e3837a" />
        <Slice from={0} to={35} f="#ffaeaa" />
        <Slice from={35} to={145} f={BLUE_D} />
        <Slice from={145} to={270} f={BLUE_L} />
      </>
    ),
  },
  {
    on: true,
    draw: (
      <>
        <Box r={[14, 16, 62, 24]} f={BLUE_D} />
        <Box r={[14, 32, 102, 40]} f={BLUE_D} />
        <Box r={[14, 48, 38, 56]} f={BLUE_D} />
        <Box r={[14, 64, 84, 72]} f={BLUE_D} />
      </>
    ),
  },
  {
    on: true,
    draw: (
      <>
        <Box r={[16, 16, 32, 30]} f={BLUE_D} />
        <Box r={[16, 30, 32, 74]} f={BLUE_L} />
        <Box r={[38, 28, 54, 44]} f={BLUE_D} />
        <Box r={[38, 44, 54, 74]} f={BLUE_L} />
        <Box r={[62, 22, 78, 60]} f={BLUE_D} />
        <Box r={[62, 60, 78, 74]} f={BLUE_L} />
        <Box r={[86, 36, 102, 54]} f={BLUE_D} />
        <Box r={[86, 54, 102, 74]} f={BLUE_L} />
      </>
    ),
  },
  {
    on: true,
    sel: true,
    draw: (
      <>
        <Box r={[14, 56, 22, 84]} f="#4f84ae" />
        <Box r={[24, 38, 32, 84]} f="#a4cfee" />
        <Box r={[42, 4, 44, 84]} f="#ddd" />
        <Box r={[52, 24, 60, 84]} f="#4f84ae" />
        <Box r={[62, 46, 70, 84]} f="#a4cfee" />
        <Box r={[78, 4, 80, 84]} f="#ddd" />
        <Box r={[88, 64, 96, 84]} f="#4f84ae" />
        <Box r={[98, 36, 106, 84]} f="#a4cfee" />
      </>
    ),
  },
  {
    on: true,
    draw: (
      <>
        <Box r={[14, 14, 56, 44]} f={BLUE_M} />
        <Box r={[14, 46, 56, 74]} f={BLUE_D} />
        <Box r={[58, 14, 80, 34]} f={BLUE_M} />
        <Box r={[82, 14, 102, 34]} f={BLUE_L} />
        <Box r={[58, 36, 72, 56]} f="#ffb3ab" />
        <Box r={[58, 58, 72, 74]} f="#e3837a" />
        <Box r={[74, 36, 88, 56]} f={BLUE_M} />
        <Box r={[90, 36, 102, 56]} f={BLUE_L} />
        <Box r={[74, 58, 88, 74]} f={BLUE_L} />
        <Box r={[90, 58, 102, 66]} f={BLUE_D} />
        <Box r={[90, 68, 102, 74]} f={BLUE_L} />
      </>
    ),
  },
  {
    on: true,
    draw: (
      <g fill="none" strokeWidth="2.4">
        {[
          [24, 26, BLUE_M],
          [24, 34, BLUE_D],
          [59, 26, BLUE_D],
          [95, 26, BLUE_M],
          [95, 41, BLUE_L],
          [24, 61, BLUE_D],
          [59, 54, BLUE_D],
          [59, 62, BLUE_M],
          [95, 71, BLUE_L],
          [59, 87, BLUE_L],
        ].map(([x, y, c]) => (
          <circle key={`${x}-${y}`} cx={x} cy={y} r="9" stroke={c} />
        ))}
      </g>
    ),
  },
  {
    draw: (
      <g fill="none" strokeWidth="2">
        <path d="M59 4V84" stroke="#ddd" />
        {[
          [20, 22, BLUE_D],
          [20, 32, BLUE_L],
          [39, 30, BLUE_D],
          [39, 53, BLUE_L],
          [20, 69, BLUE_L],
          [39, 73, BLUE_D],
          [80, 23, BLUE_L],
          [98, 31, BLUE_D],
          [98, 39, BLUE_M],
          [80, 61, BLUE_M],
          [80, 69, BLUE_L],
          [98, 65, BLUE_L],
        ].map(([x, y, c]) => (
          <circle key={`${x}-${y}`} cx={x} cy={y} r="7" stroke={c} />
        ))}
      </g>
    ),
  },
  {
    draw: (
      <>
        <Line pts={[[13, 53], [26, 66], [59, 50], [84, 66], [104, 61]]} c={BLUE_M} />
        <Line pts={[[13, 37], [26, 43], [49, 25], [84, 51], [104, 47]]} c="#fbdca9" />
        <Line pts={[[13, 25], [26, 13], [49, 43], [68, 28], [84, 41], [104, 31]]} c={OR_L} />
      </>
    ),
  },
  {
    draw: (
      <>
        <path d="M59 4V84" stroke="#ddd" strokeWidth="1.5" />
        <Line pts={[[10, 36], [25, 40], [37, 25], [51, 27]]} c={OR_L} />
        <Line pts={[[10, 50], [25, 47], [37, 33], [51, 48]]} c="#fbdca9" />
        <Line pts={[[10, 64], [25, 73], [37, 56], [51, 56]]} c={BLUE_M} />
        <Line pts={[[65, 36], [78, 21], [90, 31], [106, 27]]} c={OR_L} />
        <Line pts={[[65, 51], [78, 45], [92, 49], [106, 41]]} c="#fbdca9" />
        <Line pts={[[65, 66], [78, 55], [90, 62], [106, 56]]} c={BLUE_M} />
      </>
    ),
  },
  {
    draw: (
      <>
        {[13, 25, 37, 49, 61, 73].map((y) => (
          <Box key={y} r={[8, y, 14, y + 1.5]} f="#ddd" />
        ))}
        {[13, 19, 25, 31, 37, 43, 49, 55, 61, 67, 73].map((y) => (
          <Box key={y} r={[104, y, 110, y + 1.5]} f="#ddd" />
        ))}
        <Line pts={[[21, 31], [38, 15], [56, 30], [69, 23], [87, 36], [99, 26]]} c={OR_L} />
        <Line pts={[[21, 48], [38, 41], [56, 61], [69, 53], [87, 64], [99, 48]]} c={BLUE_M} />
      </>
    ),
  },
  {
    draw: (
      <>
        <Area pts={[[8, 48], [32, 17], [73, 44], [108, 33]]} c="#8aaecb" />
        <Area pts={[[8, 48], [32, 33], [73, 60], [108, 41]]} c="#fbc58a" />
        <Area pts={[[8, 64], [32, 53], [73, 68], [108, 58]]} c="#fbe9c8" />
      </>
    ),
  },
  {
    draw: (
      <>
        {[0, 52].map((d) => (
          <g key={d} transform={`translate(${d} 0)`}>
            <Area pts={[[8, 47], [20, 17], [40, 43], [56, 33]]} c="#8aaecb" />
            <Area pts={[[8, 50], [20, 33], [40, 60], [56, 41]]} c="#fbc58a" />
            <Area pts={[[8, 60], [20, 52], [40, 68], [56, 58]]} c="#fbe9c8" />
          </g>
        ))}
      </>
    ),
  },
  {
    draw: (
      <>
        {[13, 25, 37, 49, 61, 73].map((y) => (
          <Box key={y} r={[8, y, 14, y + 1.5]} f="#ddd" />
        ))}
        {[13, 19, 25, 31, 37, 43, 49, 55, 61, 67, 73].map((y) => (
          <Box key={y} r={[104, y, 110, y + 1.5]} f="#ddd" />
        ))}
        <Box r={[22, 46, 32, 80]} f="#8aaecb" />
        <Box r={[38, 36, 48, 80]} f="#8aaecb" />
        <Box r={[54, 54, 64, 80]} f="#8aaecb" />
        <Box r={[70, 18, 80, 80]} f="#8aaecb" />
        <Box r={[86, 44, 96, 80]} f="#8aaecb" />
        <Line pts={[[24, 38], [41, 21], [58, 47], [76, 28], [94, 47]]} c={OR_L} />
      </>
    ),
  },
  {
    draw: (
      <>
        {[[46, 26], [30, 46], [52, 54], [18, 70], [88, 30]].map(([x, y]) => (
          <circle key={x} cx={x} cy={y} r="7" fill="none" stroke={OR_L} strokeWidth="2.4" />
        ))}
        {[[73, 17], [65, 39], [95, 51], [37, 66], [73, 63]].map(([x, y]) => (
          <path key={x + y} d={`M${x - 9} ${y}h18M${x} ${y - 9}v18`} stroke="#a5d9bd" strokeWidth="2" />
        ))}
      </>
    ),
  },
  {
    draw: (
      <>
        {[[14, 72], [24, 62], [34, 44], [44, 24], [54, 16], [64, 24], [74, 44], [84, 62], [94, 72]].map(([x, y]) => (
          <Box key={x} r={[x, y, x + 8, 78]} f="#8fc9ae" />
        ))}
      </>
    ),
  },
  {
    on: true,
    draw: (
      <>
        {[
          [23, 23, 69, 38, 46, 62],
          [47, 19, 73, 28, 46, 56],
          [71, 17, 75, 34, 50, 66],
          [95, 13, 77, 24, 48, 58],
        ].map(([x, t, b, l, m, d]) => (
          <g key={x}>
            <Box r={[x - 7, l, x + 7, m]} f={LIGHT_G} />
            <Box r={[x - 7, m, x + 7, d]} f={DARK_G} />
            <path d={`M${x - 5} ${t}h10M${x} ${t}V${b}M${x - 5} ${b}h10`} stroke="#666" strokeWidth="2" fill="none" />
          </g>
        ))}
      </>
    ),
  },
  {
    draw: (
      <>
        <Box r={[10, 10, 28, 26]} f="#8fc9ae" />
        <Box r={[42, 10, 50, 26]} f="#f6b171" />
        <Box r={[52, 10, 60, 26]} f="#fcc99c" />
        <Box r={[74, 10, 78, 26]} f="#f6b171" />
        <Box r={[86, 10, 102, 26]} f="#fcc99c" />
        <Box r={[10, 34, 22, 50]} f="#bfe6d2" />
        <Box r={[24, 34, 30, 50]} f="#8fc9ae" />
        <Box r={[38, 34, 46, 50]} f="#8fc9ae" />
        <Box r={[52, 34, 80, 50]} f="#bfe6d2" />
        <Box r={[90, 34, 106, 50]} f="#f6b171" />
        <Box r={[10, 60, 14, 76]} f="#8fc9ae" />
        <Box r={[20, 60, 36, 76]} f="#fcc99c" />
        <Box r={[40, 60, 44, 76]} f="#f6b171" />
        <Box r={[48, 60, 56, 76]} f="#bfe6d2" />
        <Box r={[68, 60, 82, 76]} f="#8fc9ae" />
        <Box r={[94, 60, 102, 76]} f="#fcc99c" />
      </>
    ),
  },
  {
    draw: (
      <>
        {[
          [12, 62, 69],
          [36, 92, 83],
          [60, 54, 95],
        ].map(([y, end, tick]) => (
          <g key={y}>
            <Box r={[12, y, 104, y + 16]} f="#f8f8f8" />
            <Box r={[12, y, 78, y + 16]} f="#f0f0f0" />
            <Box r={[12, y + 4, end, y + 12]} f="#8fc9ae" />
            <Box r={[tick - 1, y, tick + 1, y + 16]} f="#888" />
          </g>
        ))}
      </>
    ),
  },
  {
    on: true,
    draw: (
      <>
        {[
          [33, 57, 19, "#b2e2c7"],
          [54, 24, 10, "#73bb9b"],
          [35, 29, 7, "#8ac9ab"],
          [73, 26, 6, "#b2e2c7"],
          [93, 35, 13, "#fdc697"],
          [63, 46, 11, "#fdc697"],
          [82, 57, 7, "#f5a655"],
          [62, 68, 8, "#73bb9b"],
        ].map(([x, y, r, f]) => (
          <circle key={`${x}-${y}`} cx={x} cy={y} r={r} fill={f} />
        ))}
      </>
    ),
  },
  {
    shift: true,
    draw: (
      <>
        <circle cx="72" cy="31" r="14" fill="none" stroke="#2bb287" strokeWidth="9" />
        <path d="M76 18A14 14 0 0 1 84 38" fill="none" stroke="#f7a45b" strokeWidth="9" />
        <path d="M26 28q14 0 14 12t20 24H26Z" fill="#b9dcf3" />
        <path d="M26 64q18 0 24-14t12-22v36H26Z" fill="#77aac9" opacity="0.9" />
        <path d="M26 46q14 6 20-2t14-10" fill="none" stroke="#fff" strokeWidth="1.6" />
        <Box r={[16, 28, 26, 40]} f="#9ad3f3" />
        <Box r={[16, 40, 26, 64]} f="#3d85ae" />
        <Box r={[61, 28, 71, 36]} f="#f25a5a" />
        <Box r={[61, 36, 71, 64]} f="#ffa8a0" />
        {[77, 88, 99].map((x) => (
          <circle key={x} cx={x} cy="73" r="3" fill="#888" />
        ))}
      </>
    ),
  },
];

const TOOL_A = [
  [<BackIcon key="b" />, 88],
  [<BackIcon key="f" c="#c4c4c4" flip />, 40],
  [<RedoIcon key="r" />, 74],
  [<Caret key="c" $light />, 14],
  [<SaveIcon key="s" />, 70],
  [<CylinderIcon key="d"><PlusMark x={28} y={30} /></CylinderIcon>, 56],
  [<CylinderIcon key="p"><path d="M26 20v18M33 20v18" stroke="#555" strokeWidth="3" /></CylinderIcon>, 64],
  [<Caret key="c2" />, 22],
  [
    <Svg key="rf" w={36} h={38} stroke="#c8c8c8">
      <path d="M8 6a15 15 0 0 0 8 30M28 32a15 15 0 0 0-8-30" />
      <path d="M20 34l-5 3 5 3M16 -1l5 3-5 3" />
    </Svg>,
    54,
  ],
  [<Caret key="c3" $light />, 30],
];
const TOOL_B = [
  [<NewSheetIcon key="n" />, 55],
  [<Caret key="c" />, 30],
  [<DupSheetIcon key="du" />, 58],
  [<ClearSheetIcon key="cl" />, 56],
  [<Caret key="c2" />, 30],
];
const TOOL_C = [
  [<SwapIcon key="s" />, 60],
  [<Svg key="a" w={42} h={38}><SortIcon /></Svg>, 66],
  [<Svg key="d" w={42} h={38}><SortIcon desc /></Svg>, 62],
];
const TOOL_D = [
  [<HighlightIcon key="h" />, 71],
  [<Caret key="c" />, 14],
  [<Paperclip key="p" size={38} color="#c0c0c0" strokeWidth={1.6} />, 66],
  [<Caret key="c2" $light />, 14],
  [<LabelDashIcon key="l" />, 78],
  [<PinIcon key="pn" />, 50],
];

const Tools = ({ items }) =>
  items.map(([icon, w], i) => (
    <ToolSlot key={i} $w={w}>
      {icon}
    </ToolSlot>
  ));

const TriIcon = ({ dir, bar, c = "#bdbdbd" }) => (
  <svg width="12" height="28" viewBox="0 0 12 28" fill={c}>
    <g transform={dir === "r" ? "translate(12 0) scale(-1 1)" : undefined}>
      {bar && <rect x="0" y="2" width="1.6" height="24" />}
      <path d="M10 2v24L3 14z" />
    </g>
  </svg>
);
const ViewModeIcon = ({ mode }) => {
  if (mode === 0)
    return (
      <svg width="22" height="30" viewBox="0 0 22 30" fill="#bbb">
        {[0, 11, 22].map((y) =>
          [0, 8, 16].map((x) => <rect key={`${x}-${y}`} x={x} y={y} width="6" height="8" />)
        )}
      </svg>
    );
  if (mode === 1)
    return (
      <svg width="22" height="30" viewBox="0 0 22 30" fill="#bbb">
        <rect width="22" height="18" />
        {[0, 8, 16].map((x) => (
          <rect key={x} x={x} y="22" width="6" height="8" />
        ))}
      </svg>
    );
  return (
    <svg width="22" height="30" viewBox="0 0 22 30" fill="#666">
      <rect width="22" height="30" />
    </svg>
  );
};

const TabDoc = ({ kind }) => (
  <Svg w={26} h={36} sw={1.6}>
    {kind === "sheet" && (
      <>
        <rect x="1" y="1" width="18" height="26" />
        <path d="M6 20v-8M10 20v-12M14 20v-6" strokeWidth="1.2" />
      </>
    )}
    {kind === "dash" && (
      <>
        <rect x="1" y="1" width="18" height="26" />
        <path d="M10 1v26M1 13h18" />
      </>
    )}
    {kind === "story" && <path d="M2 1l8 5 8-5v26H2z" />}
    <PlusMark x={18} y={28} s={7} c="#555" />
  </Svg>
);

export default function App() {
  return (
    <>
      <GlobalStyle />
      <Desktop>
        <MenuBar>
          <FaApple size={32} />
          <MenuItem $gap={34} $bold>Tableau</MenuItem>
          <MenuItem $gap={41}>File</MenuItem>
          <MenuItem $gap={40}>Data</MenuItem>
          <MenuItem $gap={41}>Worksheet</MenuItem>
          <MenuItem $gap={40}>Dashboard</MenuItem>
          <MenuItem $gap={40}>Story</MenuItem>
          <MenuItem $gap={40}>Analysis</MenuItem>
          <MenuItem $gap={40}>Map</MenuItem>
          <MenuItem $gap={40}>Format</MenuItem>
          <MenuItem $gap={40}>Server</MenuItem>
          <MenuItem $gap={40}>Window</MenuItem>
          <MenuItem $gap={40}>Help</MenuItem>
          <MenuRight>
            <MenuSlot $w={88}>
              <Svg w={34} h={36} stroke="#fff" sw={2}>
                <path d="M4 20a12 14 0 0 1 20-12l-8 12-4 8q-8-2-8-8z" fill="#d8c4bc" stroke="none" />
                <circle cx="22" cy="24" r="10" fill="#f5ece8" stroke="none" />
                <path d="M18 20l8 8M26 20l-8 8" stroke="#5a2a20" />
              </Svg>
            </MenuSlot>
            <MenuSlot $w={88}>
              <Svg w={40} h={36} stroke="#fff" sw={2}>
                <path d="M3 16h20v12q-4 6-12 6-8-2-8-18z" fill="#e8dcd8" stroke="none" />
                <path d="M8 8h5v6H8zM15 8h5v6h-5zM15 1h5v5h-5z" fill="#e8dcd8" stroke="none" />
                <circle cx="28" cy="24" r="9" fill="#5a2a20" />
                <path d="M28 18v8M28 28v2" />
              </Svg>
            </MenuSlot>
            <MenuSlot $w={60}>
              <CirclePlay size={32} color="#fff" strokeWidth={1.8} />
            </MenuSlot>
            <MenuItem $gap={21}>Michael Gilkes</MenuItem>
            <MenuSlot $w={112}>
              <BatteryShell />
            </MenuSlot>
            <MenuSlot $w={68}>
              <Wifi size={34} color="#fff" strokeWidth={2.6} />
            </MenuSlot>
            <MenuSlot $w={68}>
              <Search size={30} color="#fff" strokeWidth={2.2} />
            </MenuSlot>
            <MenuSlot $w={68}>
              <Svg w={30} h={36} stroke="#fff" sw={2}>
                <rect x="2" y="2" width="26" height="14" rx="7" />
                <circle cx="20" cy="9" r="4" fill="#fff" />
                <rect x="2" y="20" width="26" height="14" rx="7" fill="#eee" />
                <circle cx="10" cy="27" r="4" fill="#5a2a20" stroke="none" />
              </Svg>
            </MenuSlot>
            <MenuItem $gap={16}>Sun Jul 27&nbsp;&nbsp;&nbsp;&nbsp;11:41 AM</MenuItem>
            <MenuSlot $w={38} />
          </MenuRight>
        </MenuBar>
        <Window>
          <TitleBar>
            <Traffic>
              <Light $c="#f06b5e" />
              <Light $c="#f6be4f" />
              <Light $c="#61c554" />
            </Traffic>
            <TableauLogo size={30} />
            Tableau - Visualization - Tableau license expires in 14 days
          </TitleBar>
          <Toolbar>
            <ToolGroup $w={96}>
              <ToolSlot $w={94}>
                <TableauLogo size={38} />
              </ToolSlot>
            </ToolGroup>
            <ToolGroup $w={523}>
              <Tools items={TOOL_A} />
            </ToolGroup>
            <ToolGroup $w={251}>
              <ToolSlot $w={12} />
              <Tools items={TOOL_B} />
            </ToolGroup>
            <ToolGroup $w={221}>
              <ToolSlot $w={15} />
              <Tools items={TOOL_C} />
            </ToolGroup>
            <ToolGroup $w={542}>
              <Tools items={TOOL_D} />
              <ViewSelect>
                <span>Standard</span>
                <SelectArrow>
                  <Caret />
                </SelectArrow>
              </ViewSelect>
            </ToolGroup>
            <ToolGroup $w={172}>
              <ToolSlot $w={80}>
                <ShowCardsIcon />
              </ToolSlot>
              <ToolSlot $w={6}>
                <Caret />
              </ToolSlot>
              <ToolSlot $w={72}>
                <PresentationIcon />
              </ToolSlot>
            </ToolGroup>
            <ToolGroup $w={80}>
              <ToolSlot $w={88}>
                <Share2 size={40} color="#666" strokeWidth={1.6} />
              </ToolSlot>
            </ToolGroup>
            <RightTools>
              <ToolSlot $w={63}>
                <BotIcon />
              </ToolSlot>
              <ToolSlot $w={63}>
                <SignpostIcon />
              </ToolSlot>
            </RightTools>
            <ShowMeTab>
              <ShowMeIcon />
              Show Me
            </ShowMeTab>
          </Toolbar>
          <Workspace>
            <DataPane>
              <PaneTabs>
                <PaneTab $active>Data</PaneTab>
                <PaneTab>
                  Analytics
                  <Svg w={12} h={24} sw={1.8}>
                    <path d="M10 2L3 12l7 10" />
                  </Svg>
                </PaneTab>
              </PaneTabs>
              <SourceRow>
                <Svg w={30} h={38} sw={1.8}>
                  <ellipse cx="12" cy="7" rx="8" ry="5" />
                  <path d="M4 7v22q0 4 8 5M20 7v14" />
                  <circle cx="20" cy="27" r="8" fill="#3d7ea6" stroke="none" />
                  <path d="M16 27l3 3 5-6" stroke="#fff" strokeWidth="1.8" />
                </Svg>
                Orders (EqSK5enRQCu...
              </SourceRow>
              <SearchRow>
                <SearchBox>
                  Search
                  <Search size={24} color="#666" strokeWidth={1.6} />
                </SearchBox>
                <SearchTools>
                  <Svg w={24} h={26} sw={1.8}>
                    <path d="M1 2h22L14 14v11h-4V14z" />
                  </Svg>
                  <Svg w={4} h={34} stroke="#ccc" sw={2}>
                    <path d="M2 0v34" />
                  </Svg>
                  <Svg w={26} h={20} sw={2}>
                    <path d="M1 3h24M1 10h24M1 17h24" strokeDasharray="5 2" />
                  </Svg>
                  <ToolSlot $w={20}>
                    <Caret />
                  </ToolSlot>
                </SearchTools>
              </SearchRow>
              <TablesTitle>Tables</TablesTitle>
              <FieldList>
                {DIMS.map(([name, type, italic]) => (
                  <FieldRow key={name} $italic={italic}>
                    <FieldIconSlot>
                      <FieldIcon type={type} c={BLUE} />
                    </FieldIconSlot>
                    {name}
                  </FieldRow>
                ))}
                <Divider />
                {MEASURES.map(([name, type, italic]) => (
                  <FieldRow key={name} $italic={italic}>
                    <FieldIconSlot>
                      <FieldIcon type={type} c={FIELD_GREEN} />
                    </FieldIconSlot>
                    {name}
                  </FieldRow>
                ))}
              </FieldList>
            </DataPane>

            <CardsColumn>
              <Card $h={123} $pt={14}>
                <CardTitle>Pages</CardTitle>
              </Card>
              <Card $h={153} $pt={13}>
                <CardTitle>Filters</CardTitle>
                <FilterPill $c={GREEN} $w={288}>SUM(Sales)</FilterPill>
              </Card>
              <Card $h={446} $pt={14}>
                <CardTitle>Marks</CardTitle>
                <MarkSelect>
                  <MarkTypeIcon />
                  <span>Automatic</span>
                  <SelectArrow>
                    <Caret />
                  </SelectArrow>
                </MarkSelect>
                <MarkGrid>
                  <MarkButton>
                    <PaletteDots />
                    Color
                  </MarkButton>
                  <MarkButton>
                    <Svg w={30} h={28} sw={2}>
                      <path d="M8 18a10 10 0 1 1 8 8" />
                      <circle cx="8" cy="20" r="7" />
                      <path d="M5 17l6 6" />
                    </Svg>
                    Size
                  </MarkButton>
                  <MarkButton>
                    <Svg w={28} h={28} sw={2}>
                      <rect x="1" y="1" width="26" height="26" />
                      <text x="14" y="22" textAnchor="middle" fontSize="20" fontFamily="Liberation Serif, serif" fill="#333" stroke="none">T</text>
                    </Svg>
                    Label
                  </MarkButton>
                  <MarkButton>
                    <Svg w={28} h={28} sw={1.6} stroke="#444">
                      <circle cx="14" cy="4" r="3.5" fill="#444" />
                      <path d="M14 8v8M4 20v-4h20v4M14 16v4" />
                      <circle cx="4" cy="24" r="2.5" />
                      <circle cx="14" cy="24" r="2.5" />
                      <circle cx="24" cy="24" r="2.5" />
                    </Svg>
                    Detail
                  </MarkButton>
                  <MarkButton>
                    <Svg w={30} h={28} sw={2}>
                      <path d="M2 2h26v19H13l-5 6v-6H2z" />
                    </Svg>
                    Tooltip
                  </MarkButton>
                </MarkGrid>
                <MarkField>
                  <PaletteDots />
                  <Pill $c={GREEN} $w={222}>SUM(Sales)</Pill>
                </MarkField>
              </Card>
            </CardsColumn>

            <SheetColumn>
              <Shelf $h={55}>
                <ShelfLabel>
                  <ColumnsIcon />
                  Columns
                </ShelfLabel>
                <Pill $c={BLUE} $w={296}>
                  Customer Name
                  <DimMiniIcon />
                </Pill>
              </Shelf>
              <Shelf $h={54}>
                <ShelfLabel>
                  <RowsIcon />
                  Rows
                </ShelfLabel>
                <Pill $c={GREEN_DARK} $w={296}>SUM(Sales)</Pill>
              </Shelf>
              <View>
                <ViewTitle>Customers sales</ViewTitle>
                <Chart />
                <Tooltip>
                  <span>Customer Name:</span>
                  <b>Sherye Christmas</b>
                  <span>Sales:</span>
                  <b>4,803.9</b>
                </Tooltip>
              </View>
            </SheetColumn>

            <ShowMePanel>
              <ShowMeInner>
                <ThumbGrid>
                  {THUMBS.map((t, i) => (
                    <Thumb key={i} $on={t.on} $sel={t.sel} $shift={t.shift}>
                      <ThumbSvg>{t.draw}</ThumbSvg>
                    </Thumb>
                  ))}
                </ThumbGrid>
                <Hint>
                  For <b>side-by-side bars</b> use:
                </Hint>
                <NeedList>
                  <NeedRow>
                    <NeedIcon $top>
                      <RowsIcon c="#333" />
                    </NeedIcon>
                    <NeedPill $c={GREEN} $w={135}>Measure</NeedPill>
                  </NeedRow>
                  <NeedRow>
                    <NeedIcon $top>
                      <ColumnsIcon c="#333" n={4} h={20} />
                    </NeedIcon>
                    <NeedPill $c={BLUE} $w={157}>Dimension</NeedPill>
                  </NeedRow>
                  <NeedRow>
                    <NeedIcon>
                      <PaletteDots />
                    </NeedIcon>
                    <NeedPill $c={BLUE} $w={157}>Dimension</NeedPill>
                  </NeedRow>
                </NeedList>
                <ChooseButton>Choose for me</ChooseButton>
              </ShowMeInner>
            </ShowMePanel>
          </Workspace>
          <SheetTabs>
            <SheetTab $w={261}>
              <Svg w={26} h={32} sw={1.8}>
                <ellipse cx="13" cy="7" rx="9" ry="5" />
                <path d="M4 7v18q0 5 9 5t9-5V7" />
              </Svg>
              Data Source
            </SheetTab>
            <SheetTab $w={217} $active>Customers sales</SheetTab>
            <SheetTab $w={162}>Profit Chart</SheetTab>
            <SheetTab $w={246}>Sales Bubble Chart</SheetTab>
            <SheetTab $w={312}>Cuisine Sales and Profits</SheetTab>
            <SheetTab $w={189}>
              <Svg w={24} h={32} sw={1.8}>
                <rect x="2" y="2" width="20" height="28" />
                <path d="M12 2v28M2 16h20" />
              </Svg>
              Dashboard
            </SheetTab>
            <SheetTab $w={63} $center><TabDoc kind="sheet" /></SheetTab>
            <SheetTab $w={65} $center><TabDoc kind="dash" /></SheetTab>
            <SheetTab $w={64} $center><TabDoc kind="story" /></SheetTab>
          </SheetTabs>
          <StatusBar>
            <StatusText $ml={24} $w={120}>31 marks</StatusText>
            <StatusText $ml={0} $w={223}>1 row by 31 columns</StatusText>
            <StatusText $ml={0} $w={1762}>SUM(Sales): 143,709.1</StatusText>
            <StatusCell $w={254} />
            <StatusCell $w={54} />
            <StatusCell $w={54} />
            <StatusCell $w={94} />
            <StatusCell $w={142} $px={12}>
              <TriIcon bar />
              <TriIcon />
              <TriIcon dir="r" />
              <TriIcon dir="r" bar />
            </StatusCell>
            <StatusCell $w={153} $px={8}>
              <ViewModeIcon mode={0} />
              <ViewModeIcon mode={1} />
              <ViewModeIcon mode={2} />
            </StatusCell>
          </StatusBar>
        </Window>
      </Desktop>
    </>
  );
}
